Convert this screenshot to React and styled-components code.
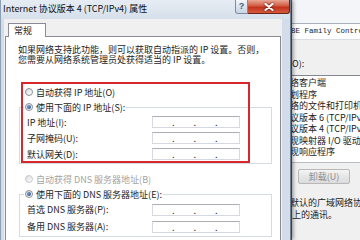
import styled, { createGlobalStyle } from "styled-components";

const GlobalStyle = createGlobalStyle`
  html, body {
    margin: 0;
    padding: 0;
  }
  body {
    width: 360px;
    height: 240px;
    overflow: hidden;
    background: #f0f0f0;
    font-family: "Noto Sans CJK SC", "Noto Sans", sans-serif;
    font-size: 9px;
    color: #1c1c1c;
  }
`;

const Screen = styled.div`
  display: flex;
  width: 360px;
  height: 240px;
  overflow: hidden;
`;

/* front dialog */
const Dialog = styled.div`
  position: relative;
  z-index: 2;
  flex: 0 0 291px;
  display: flex;
  flex-direction: column;
  box-sizing: border-box;
  background: #d3dde9;
  border-left: 1px solid #8d9fb5;
  border-right: 1px solid #6f7f92;
  box-shadow: 2px 0 4px rgba(0, 0, 0, 0.45);
`;

const TitleBar = styled.div`
  height: 19px;
  display: flex;
  align-items: flex-start;
  padding-left: 2px;
  background: linear-gradient(#e6ecf3, #d6e0eb);
`;

const Title = styled.div`
  flex: 1;
  line-height: 18px;
  white-space: nowrap;
  color: #111;
`;

const HelpButton = styled.div`
  width: 13px;
  height: 14px;
  box-sizing: border-box;
  border: 1px solid #7c8ea5;
  border-top: none;
  border-radius: 0 0 0 3px;
  background: linear-gradient(#f4f7fa, #d9e2ed 50%, #cbd6e4);
  color: #4a5d76;
  font-family: "Liberation Sans", sans-serif;
  font-weight: bold;
  font-size: 9px;
  line-height: 13px;
  text-align: center;
`;

const CloseButton = styled.div`
  width: 42px;
  height: 14px;
  box-sizing: border-box;
  border: 1px solid #6d2418;
  border-top: none;
  border-left: none;
  border-radius: 0 0 3px 0;
  background: linear-gradient(#e9a897, #d35c43 45%, #c2321d 55%, #d65a3d);
  display: flex;
  align-items: center;
  justify-content: center;
  svg {
    filter: drop-shadow(0 0 1px rgba(60, 0, 0, 0.9));
  }
`;

const Body = styled.div`
  flex: 1;
  display: flex;
  flex-direction: column;
  margin: 0 8px 0 3px;
  padding: 0 1px;
  background: #f0f0f0;
`;

const Tabs = styled.div`
  display: flex;
  padding: 4px 0 0 3px;
`;

const Tab = styled.div`
  position: relative;
  z-index: 1;
  height: 14px;
  box-sizing: border-box;
  margin-bottom: -1px;
  padding: 0 13px 0 5px;
  border: 1px solid #898c95;
  border-bottom: none;
  background: #fff;
  line-height: 13px;
`;

const Panel = styled.div`
  position: relative;
  flex: 1;
  background: #fff;
  border: 1px solid #898c95;
  border-bottom: none;
  padding: 8px 8px 0 12px;
`;

const Intro = styled.p`
  margin: 0;
  line-height: 10px;
  white-space: nowrap;
`;

const Choice = styled.div`
  display: flex;
  align-items: center;
  height: 12px;
  margin: ${(p) => p.$top}px 0 0 7px;
  color: ${(p) => (p.$disabled ? "#a3a3a3" : "#1c1c1c")};
  white-space: nowrap;
`;

const Radio = styled.span`
  position: relative;
  flex: 0 0 auto;
  width: 8px;
  height: 8px;
  box-sizing: border-box;
  margin-right: 3px;
  border-radius: 50%;
  border: 1px solid ${(p) => (p.$disabled ? "#c8c8c8" : "#8a8f97")};
  background: linear-gradient(135deg, #dadde2, #fdfdfd);
  &::after {
    content: "";
    display: ${(p) => (p.$checked ? "block" : "none")};
    position: absolute;
    left: 1px;
    top: 1px;
    width: 4px;
    height: 4px;
    border-radius: 50%;
    background: radial-gradient(circle at 35% 35%, #6f9bd6, #1f3f78);
  }
`;

const Group = styled.fieldset`
  margin: ${(p) => p.$top}px 0 0 1px;
  padding: 1px 0 1px 7px;
  border: 1px solid #d5dbe2;
  min-width: 0;
`;

const Legend = styled.legend`
  display: flex;
  align-items: center;
  height: 12px;
  margin-left: -3px;
  padding: 0 1px;
  white-space: nowrap;
  color: #1c1c1c;
`;

const Field = styled.div`
  display: flex;
  align-items: center;
  height: ${(p) => p.$h}px;
`;

const Label = styled.span`
  flex: 0 0 125px;
  white-space: nowrap;
`;

const IpBox = styled.div`
  width: 88px;
  height: 12px;
  box-sizing: border-box;
  display: flex;
  border: 1px solid #d6dae0;
  border-top-color: #abadb3;
  background: #fff;
`;

const Octet = styled.span`
  flex: 1;
  text-align: right;
  line-height: 11px;
  color: #222;
`;

const Highlight = styled.div`
  position: absolute;
  left: 15px;
  top: 45px;
  width: 229px;
  height: 81px;
  box-sizing: border-box;
  border: 2px solid #d7262c;
  pointer-events: none;
`;

/* window behind */
const BackWindow = styled.div`
  flex: 1;
  display: flex;
  flex-direction: column;
  min-width: 0;
  overflow: hidden;
  background: #f0f0f0;
  border-left: 1px solid #55616f;
`;

const TopStrip = styled.div`
  height: 23px;
  background: #f3f5f8;
`;

const AdapterBox = styled.div`
  height: 17px;
  box-sizing: border-box;
  border-top: 1px solid #a9b0b9;
  border-bottom: 1px solid #d9dde3;
  background: #fff;
  font-family: "Liberation Mono", monospace;
  font-size: 7.5px;
  line-height: 15px;
  white-space: nowrap;
  text-indent: -1px;
`;

const ListCaption = styled.div`
  height: 35px;
  box-sizing: border-box;
  display: flex;
  align-items: flex-end;
  padding-bottom: 5px;
  white-space: nowrap;
`;

const ItemList = styled.div`
  height: 88px;
  box-sizing: border-box;
  padding-top: 1px;
  border-top: 1px solid #828790;
  border-bottom: 1px solid #b9bdc4;
  background: #fff;
`;

const Item = styled.div`
  line-height: 11.5px;
  white-space: nowrap;
  text-indent: -2px;
`;

const ButtonRow = styled.div`
  height: 27px;
  display: flex;
  align-items: center;
  padding-left: 6px;
`;

const PushButton = styled.div`
  width: 52px;
  height: 15px;
  box-sizing: border-box;
  border: 1px solid #b8b8b8;
  border-radius: 2px;
  background: linear-gradient(#f4f4f4, #e6e6e6 50%, #dcdcdc);
  color: #8c8c8c;
  line-height: 13px;
  text-align: center;
`;

const Description = styled.div`
  padding-top: 7px;
  line-height: 12px;
  white-space: nowrap;
  text-indent: -2px;
`;

function IpField() {
  return (
    <IpBox>
      <Octet>.</Octet>
      <Octet>.</Octet>
      <Octet>.</Octet>
      <Octet />
    </IpBox>
  );
}

export default function App() {
  return (
    <>
      <GlobalStyle />
      <Screen>
        <Dialog>
          <TitleBar>
            <Title>Internet 协议版本 4 (TCP/IPv4) 属性</Title>
            <HelpButton>?</HelpButton>
            <CloseButton>
              <svg width="10" height="8" viewBox="0 0 10 8">
                <path d="M1.5 1 L8.5 7 M8.5 1 L1.5 7" stroke="#fff" strokeWidth="2" strokeLinecap="round" />
              </svg>
            </CloseButton>
          </TitleBar>
          <Body>
            <Tabs>
              <Tab>常规</Tab>
            </Tabs>
            <Panel>
              <Intro>
                如果网络支持此功能，则可以获取自动指派的 IP 设置。否则，
                <br />
                您需要从网络系统管理员处获得适当的 IP 设置。
              </Intro>
              <Choice $top={21}>
                <Radio />
                自动获得 IP 地址(O)
              </Choice>
              <Group $top={3}>
                <Legend>
                  <Radio $checked />
                  使用下面的 IP 地址(S):
                </Legend>
                <Field $h={16}>
                  <Label>IP 地址(I):</Label>
                  <IpField />
                </Field>
                <Field $h={16}>
                  <Label>子网掩码(U):</Label>
                  <IpField />
                </Field>
                <Field $h={16}>
                  <Label>默认网关(D):</Label>
                  <IpField />
                </Field>
              </Group>
              <Choice $top={9} $disabled>
                <Radio $disabled />
                自动获得 DNS 服务器地址(B)
              </Choice>
              <Group $top={3}>
                <Legend>
                  <Radio $checked />
                  使用下面的 DNS 服务器地址(E):
                </Legend>
                <Field $h={17}>
                  <Label>首选 DNS 服务器(P):</Label>
                  <IpField />
                </Field>
                <Field $h={17}>
                  <Label>备用 DNS 服务器(A):</Label>
                  <IpField />
                </Field>
              </Group>
              <Highlight />
            </Panel>
          </Body>
        </Dialog>
        <BackWindow>
          <TopStrip />
          <AdapterBox>BE Family Controller</AdapterBox>
          <ListCaption>O):</ListCaption>
          <ItemList>
            <Item>络客户端</Item>
            <Item>划程序</Item>
            <Item>络的文件和打印机共享</Item>
            <Item>议版本 6 (TCP/IPv6)</Item>
            <Item>议版本 4 (TCP/IPv4)</Item>
            <Item>现映射器 I/O 驱动程序</Item>
            <Item>现响应程序</Item>
          </ItemList>
          <ButtonRow>
            <PushButton>卸载(U)</PushButton>
          </ButtonRow>
          <Description>
            默认的广域网络协议，它提供
            <br />
            上的通讯。
          </Description>
        </BackWindow>
      </Screen>
    </>
  );
}
